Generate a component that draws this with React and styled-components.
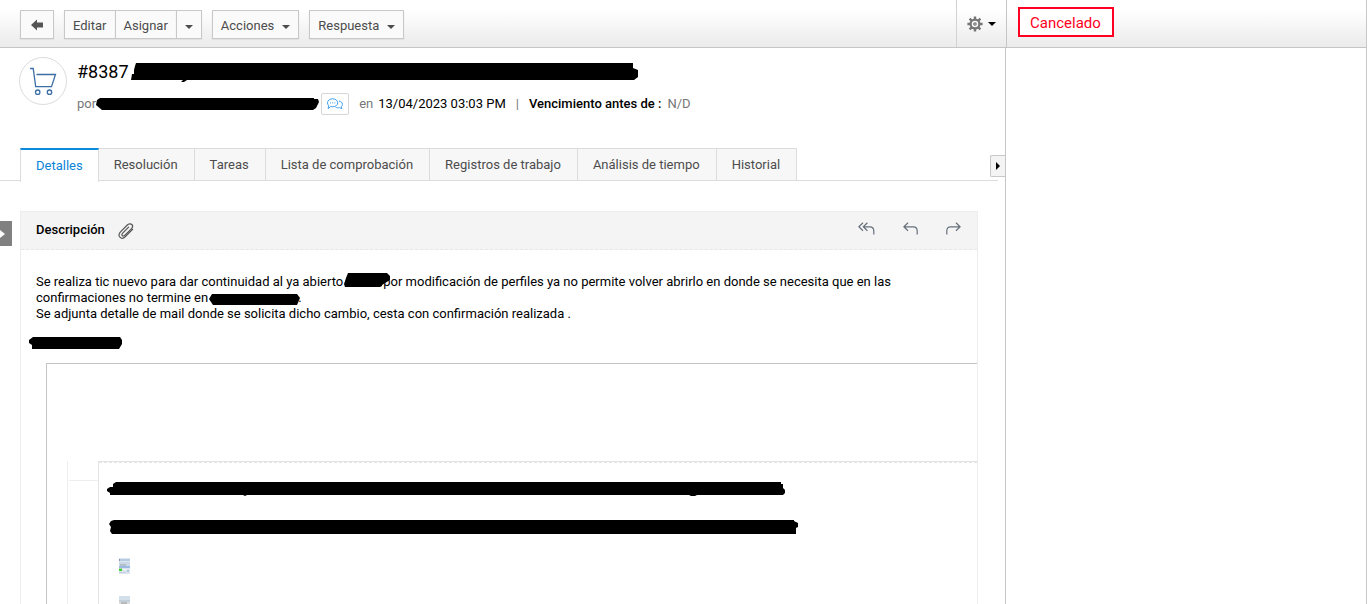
import styled, { createGlobalStyle, css } from "styled-components";

const tabs = [
  "Detalles",
  "Resolución",
  "Tareas",
  "Lista de comprobación",
  "Registros de trabajo",
  "Análisis de tiempo",
  "Historial",
];

const Scribble = ({ width, height, d }) => (
  <Ink width={width} height={height} viewBox={`0 0 ${width} ${height}`} aria-hidden="true">
    <path d={d} />
  </Ink>
);

const CaretIcon = () => (
  <svg width="8" height="4" viewBox="0 0 8 4" fill="currentColor" aria-hidden="true">
    <path d="M0 0h8L4 4z" />
  </svg>
);

const BackIcon = () => (
  <svg width="12" height="12" viewBox="0 0 12 12" fill="#555" aria-hidden="true">
    <path d="M0 6L6 0.5V3.5H12V8.5H6V11.5z" />
  </svg>
);

const GearIcon = () => (
  <svg width="16" height="16" viewBox="0 0 16 16" fill="none" stroke="#757575" aria-hidden="true">
    <circle cx="8" cy="8" r="4.4" strokeWidth="2.2" />
    <circle cx="8" cy="8" r="1.2" strokeWidth="1.2" />
    <path
      strokeWidth="2.4"
      d="M8 0.4v2.6M8 13v2.6M0.4 8H3M13 8h2.6M2.6 2.6l1.8 1.8M11.6 11.6l1.8 1.8M2.6 13.4l1.8-1.8M11.6 4.4l1.8-1.8"
    />
  </svg>
);

const CartIcon = () => (
  <svg width="28" height="30" viewBox="0 0 28 30" fill="none" stroke="#3b6ea5" strokeWidth="1.3" aria-hidden="true">
    <path d="M1 2.5h3.2L6.7 20.6H22.5L26.5 8.5H7.5" />
    <circle cx="8.7" cy="26.2" r="2.2" />
    <circle cx="20.5" cy="26.2" r="2.2" />
  </svg>
);

const ChatIcon = () => (
  <svg width="16" height="12" viewBox="0 0 16 12" fill="none" stroke="#3fa0ee" aria-hidden="true">
    <path d="M5.6 0.8C8.6 0.8 10.7 2.5 10.7 4.8S8.6 8.8 5.6 8.8C4.9 8.8 4.3 8.7 3.7 8.5L1.2 10.6 1.6 7.5C0.9 6.8 0.5 5.9 0.5 4.8 0.5 2.5 2.7 0.8 5.6 0.8z" />
    <path d="M12 3C14 3.2 15.4 4.5 15.4 6.3 15.4 7.2 15 7.9 14.4 8.5L14.8 10.8 12.6 9.6C11 10 9.6 9.8 8.6 9.2" />
    <path d="M3 4.9h1M5.2 4.9h1M7.4 4.9h1" />
  </svg>
);

const ClipIcon = () => (
  <svg width="16" height="16" viewBox="0 0 16 16" fill="none" stroke="#555" strokeWidth="1.2" strokeLinecap="round" aria-hidden="true">
    <path d="M14.6 6.4L7.4 13.6C5.8 15.2 3.4 15.7 1.9 14.2S0.9 10.4 2.5 8.8L9.3 2C10.6 0.7 12.6 0.3 13.8 1.5S14.6 4.6 13.3 5.9L7 12.2C6.2 13 5 13.3 4.3 12.6S4.1 10.7 4.9 9.9L10.6 4.2" />
  </svg>
);

const ReplyAllIcon = () => (
  <svg width="17" height="13" viewBox="0 0 17 13" fill="none" stroke="#66717c" strokeWidth="1.2" aria-hidden="true">
    <path d="M5 0.8L0.9 4.8 5 8.8M9.4 0.8L5.3 4.8 9.4 8.8M5.4 4.8H12C14.5 4.8 15.8 6.4 15.8 9V12.4" />
  </svg>
);

const ReplyIcon = () => (
  <svg width="15" height="13" viewBox="0 0 15 13" fill="none" stroke="#66717c" strokeWidth="1.2" aria-hidden="true">
    <path d="M5 0.8L0.9 4.8 5 8.8M1 4.8H10.4C13 4.8 14.2 6.4 14.2 9V12.4" />
  </svg>
);

const ForwardIcon = () => (
  <svg width="15" height="13" viewBox="0 0 15 13" fill="none" stroke="#66717c" strokeWidth="1.2" aria-hidden="true">
    <path d="M10 0.8L14.1 4.8 10 8.8M14 4.8H4.6C2 4.8 0.8 6.4 0.8 9V12.4" />
  </svg>
);

const Thumbnail = () => (
  <svg width="11" height="16" viewBox="0 0 11 16" aria-hidden="true">
    <rect width="11" height="16" fill="#dbe5ef" />
    <rect y="1" width="11" height="2" fill="#b7cce2" />
    <rect y="1" width="1" height="2" fill="#8395a8" />
    <rect y="4" width="11" height="4" fill="#cbd9e6" />
    <rect x="1" y="6" width="6" height="2" fill="#b3bec8" />
    <rect y="8" width="11" height="2" fill="#9dbbe2" />
    <rect y="10" width="3" height="1" fill="#a9d7a0" />
    <rect y="11" width="3" height="2" fill="#3fd32d" />
    <rect x="4" y="11" width="3" height="1" fill="#f3f7fa" />
    <rect x="8" y="12" width="2" height="2" fill="#b4c6da" />
    <rect y="14" width="7" height="1" fill="#c4d0db" />
  </svg>
);

const ThumbnailGray = () => (
  <svg width="11" height="16" viewBox="0 0 11 16" aria-hidden="true">
    <rect width="11" height="16" fill="#d3e0ea" />
    <rect y="4" width="11" height="2" fill="#c3cfd8" />
    <rect y="6" width="11" height="10" fill="#dedede" />
    <rect x="2" y="6" width="6" height="2" fill="#b9b9b9" />
  </svg>
);

const App = () => {
  return (
    <Page>
      <GlobalStyle />

      <Header>
        <Toolbar>
          <BackButton type="button" aria-label="Volver">
            <BackIcon />
          </BackButton>
          <ButtonGroup>
            <ToolButton type="button">Editar</ToolButton>
            <ToolButton type="button">Asignar</ToolButton>
            <ToolButton type="button" aria-label="Más opciones">
              <CaretIcon />
            </ToolButton>
          </ButtonGroup>
          <ToolButton type="button">
            Acciones <CaretIcon />
          </ToolButton>
          <ToolButton type="button">
            Respuesta <CaretIcon />
          </ToolButton>
        </Toolbar>
        <Settings type="button" aria-label="Configuración">
          <GearIcon />
          <CaretIcon />
        </Settings>
        <StatusCell>
          <Status>Cancelado</Status>
        </StatusCell>
      </Header>

      <Content>
        <Main>
          <Request>
            <Avatar>
              <CartIcon />
            </Avatar>
            <div>
              <Title>
                #8387
                <Scribble
                  width={508}
                  height={18}
                  d="M5 0H502V5L507 7V14L503 17H56L53 19H50L52 17H0L1 11H3V7L4 3z"
                />
              </Title>
              <Meta>
                <span>por</span>
                <Scribble width={223} height={13} d="M4 0H218V1H222L223 4L220 10L217 12H6L0 7L1 2z" />
                <ChatButton type="button" aria-label="Conversación">
                  <ChatIcon />
                </ChatButton>
                <span>en</span>
                <time dateTime="2023-04-13T15:03">13/04/2023 03:03 PM</time>
                <Divider>|</Divider>
                <b>Vencimiento antes de :</b>
                <span>N/D</span>
              </Meta>
            </div>
          </Request>

          <Tabs role="tablist">
            {tabs.map((tab, i) => (
              <Tab key={tab} type="button" role="tab" aria-selected={i === 0} $active={i === 0}>
                {tab}
              </Tab>
            ))}
          </Tabs>

          <Panel>
            <PanelHeader>
              <h2>Descripción</h2>
              <IconButton type="button" aria-label="Adjuntar">
                <ClipIcon />
              </IconButton>
              <PanelActions>
                <IconButton type="button" aria-label="Responder a todos">
                  <ReplyAllIcon />
                </IconButton>
                <IconButton type="button" aria-label="Responder">
                  <ReplyIcon />
                </IconButton>
                <IconButton type="button" aria-label="Reenviar">
                  <ForwardIcon />
                </IconButton>
              </PanelActions>
            </PanelHeader>

            <Description>
              <p>
                Se realiza tic nuevo para dar continuidad al ya abierto
                <Hidden $width={40}>
                  <Scribble width={46} height={14} d="M4 0H43L46 3V7L38 12V13L36 14H1L0 11L2 5z" />
                </Hidden>
                por modificación de perfiles ya no permite volver abrirlo en donde se necesita que en las
                <br />
                confirmaciones no termine en
                <Hidden $width={90}>
                  <Scribble width={91} height={9} d="M3 0H88L91 4L88 11H4L0 5z" />
                </Hidden>
                .
              </p>
              <p>Se adjunta detalle de mail donde se solicita dicho cambio, cesta con confirmación realizada .</p>
            </Description>
            <Signature>
              <Scribble width={93} height={13} d="M4 0H91L93 3V7L90 12H3V8L0 6V3z" />
            </Signature>

            <Mail>
              <Gutter />
              <Quote>
                <QuoteLine>
                  <Scribble
                    width={678}
                    height={14}
                    d="M9 0H674V2H676V6L678 8V11L676 13H590L588 14H584L582 13H140L138 14L136 13H3V11L0 9V7L3 5H6V2z"
                  />
                </QuoteLine>
                <QuoteLine>
                  <Scribble width={692} height={14} d="M7 0H687V1L691 3V7L689 8V14H5L3 11L4 7L2 4L4 1z" />
                </QuoteLine>
                <Picture>
                  <Thumbnail />
                </Picture>
                <Picture>
                  <ThumbnailGray />
                </Picture>
              </Quote>
            </Mail>
          </Panel>

          <LeftHandle type="button" aria-label="Mostrar lista">
            <svg width="5" height="8" viewBox="0 0 5 8" fill="#fff" aria-hidden="true">
              <path d="M0 0L5 4L0 8z" />
            </svg>
          </LeftHandle>
          <RightHandle type="button" aria-label="Ocultar panel">
            <svg width="4" height="8" viewBox="0 0 4 8" fill="#000" aria-hidden="true">
              <path d="M0 0L4 4L0 8z" />
            </svg>
          </RightHandle>
        </Main>
        <Aside />
      </Content>
    </Page>
  );
};

const GlobalStyle = createGlobalStyle`
  * {
    box-sizing: border-box;
  }

  body {
    margin: 0;
    background: #fff;
    color: #000;
    font-family: Roboto, "Liberation Sans", sans-serif;
    font-size: 13px;
    line-height: 16px;
  }

  h1, h2, p {
    margin: 0;
  }

  button {
    margin: 0;
    font: inherit;
    color: inherit;
    cursor: pointer;
  }
`;

const Page = styled.div`
  display: flex;
  flex-direction: column;
  height: 100vh;
  margin-right: 1px;
  border-right: 1px solid #c8c8c8;
  overflow: hidden;
`;

const Header = styled.header`
  display: flex;
  flex: none;
  height: 48px;
  border-bottom: 1px solid #c5c5c5;
  background: linear-gradient(#fff 20%, #ebebeb);
`;

const Toolbar = styled.div`
  display: flex;
  flex: 1;
  align-items: flex-start;
  gap: 10px;
  padding: 10px 20px;
`;

const ToolButton = styled.button`
  display: flex;
  align-items: center;
  gap: 8px;
  height: 29px;
  padding: 2px 8px 0;
  border: 1px solid #c8c8c8;
  background: #fafafa;
  box-shadow: 0 1px 1px #e2e2e2;
  color: #4c4c4c;

  svg {
    margin-top: 3px;
  }
`;

const BackButton = styled(ToolButton)`
  width: 34px;
  padding: 0;
  justify-content: center;

  svg {
    margin-top: 1px;
  }
`;

const ButtonGroup = styled.div`
  display: flex;

  button + button {
    margin-left: -1px;
  }
`;

const Settings = styled.button`
  display: flex;
  align-items: center;
  gap: 5px;
  width: 50px;
  padding: 0 0 0 10px;
  border: 0;
  border-left: 1px solid #d2d2d2;
  background: none;
  color: #000;
`;

const StatusCell = styled.div`
  width: 360px;
  padding: 7px 11px;
  border-left: 1px solid #c5c5c5;
`;

const Status = styled.span`
  display: inline-block;
  padding: 5px 11px 3px 10px;
  border: 2px solid #ff0022;
  color: #ff0022;
  background: #fff;
  font-size: 15px;
  line-height: 18px;
`;

const Content = styled.div`
  display: flex;
  flex: 1;
  min-height: 0;
`;

const Main = styled.main`
  position: relative;
  flex: 1;
  min-width: 0;
  overflow: hidden;
`;

const Aside = styled.aside`
  width: 361px;
  border-left: 1px solid #c5c5c5;
`;

const Ink = styled.svg`
  display: block;
  flex: none;
  fill: #000;
  overflow: visible;
`;

const Request = styled.section`
  display: flex;
  gap: 10px;
  padding: 9px 19px 0;
`;

const Avatar = styled.div`
  display: flex;
  flex: none;
  align-items: center;
  justify-content: center;
  width: 48px;
  height: 48px;
  border: 1px solid #dcdcdc;
  border-radius: 50%;
`;

const Title = styled.h1`
  display: flex;
  align-items: center;
  gap: 2px;
  height: 30px;
  font-size: 18px;
  font-weight: 400;
`;

const Meta = styled.div`
  display: flex;
  align-items: center;
  height: 34px;
  color: #777;

  time,
  b {
    color: #000;
  }

  time {
    margin-left: 5px;
  }

  b {
    margin-right: 6px;
    font-weight: 500;
  }
`;

const ChatButton = styled.button`
  display: flex;
  align-items: center;
  justify-content: center;
  width: 28px;
  height: 22px;
  margin: 0 10px 0 2px;
  padding: 0;
  border: 1px solid #d6d6d6;
  border-radius: 2px;
  background: #fff;
`;

const Divider = styled.span`
  margin: 0 10px;
`;

const Tabs = styled.div`
  display: flex;
  align-items: flex-start;
  height: 33px;
  margin: 27px 7px 0 0;
  padding-left: 20px;
  box-shadow: inset 0 -1px #dcdcdc;
`;

const Tab = styled.button`
  height: 33px;
  padding: 0 16px 0 15px;
  border: 1px solid #dcdcdc;
  border-left: 0;
  background: #f7f7f7;
  color: #4c4c4c;

  ${({ $active }) =>
    $active &&
    css`
      height: 34px;
      padding: 0 15px;
      border-left: 1px solid #dcdcdc;
      border-top: 2px solid #0a8bdc;
      border-bottom: 0;
      background: #fff;
      color: #0a84d8;
    `}
`;

const Panel = styled.section`
  margin: 30px 27px 0 20px;
  border: 1px solid #ededed;
`;

const PanelHeader = styled.div`
  display: flex;
  align-items: center;
  gap: 13px;
  height: 38px;
  padding: 0 16px 0 15px;
  border-bottom: 1px dashed #e6e6e6;
  background: #f4f4f4;

  h2 {
    padding-bottom: 2px;
    font-size: 13px;
    font-weight: 500;
  }
`;

const IconButton = styled.button`
  display: flex;
  padding: 0;
  border: 0;
  background: none;
`;

const PanelActions = styled.div`
  display: flex;
  gap: 28px;
  margin-left: auto;
  padding-bottom: 4px;
`;

const Description = styled.div`
  padding: 24px 60px 0 15px;
`;

/* keeps the room of a blacked-out word, its ink may run over the neighbours */
const Hidden = styled.span`
  position: relative;
  display: inline-block;
  width: ${({ $width }) => $width}px;
  height: 10px;

  svg {
    position: absolute;
    left: 1px;
    bottom: -1px;
  }
`;

const Signature = styled.div`
  padding: 15px 8px 13px;
`;

const Mail = styled.div`
  display: flex;
  margin-left: 25px;
  padding: 97px 0 0 20px;
  border: solid #c4c4c4;
  border-width: 1px 0 0 1px;
`;

const Gutter = styled.div`
  width: 31px;
  border-left: 1px solid #eee;

  &::after {
    content: "";
    display: block;
    height: 19px;
    margin-left: 1px;
    border-bottom: 1px solid #eee;
  }
`;

const Quote = styled.div`
  flex: 1;
  min-width: 0;
  border-left: 1px solid #e4e4e4;
  border-top: 1px solid #e4e4e4;

  &::before {
    content: "";
    display: block;
    border-top: 1px dashed #e4e4e4;
  }
`;

const QuoteLine = styled.div`
  padding: 19px 8px 5px;
`;

const Picture = styled.div`
  height: 38px;
  padding: 19px 20px 0;
`;

const Handle = styled.button`
  position: absolute;
  display: flex;
  align-items: center;
  padding: 0;
`;

const LeftHandle = styled(Handle)`
  top: 173px;
  left: 0;
  width: 12px;
  height: 25px;
  border: 0;
  background: #808080;
`;

const RightHandle = styled(Handle)`
  top: 107px;
  right: 0;
  justify-content: center;
  width: 15px;
  height: 22px;
  border: 1px solid #c8c8c8;
  border-right: 0;
  border-radius: 2px 0 0 2px;
  background: #f4f4f4;
`;

export default App;
